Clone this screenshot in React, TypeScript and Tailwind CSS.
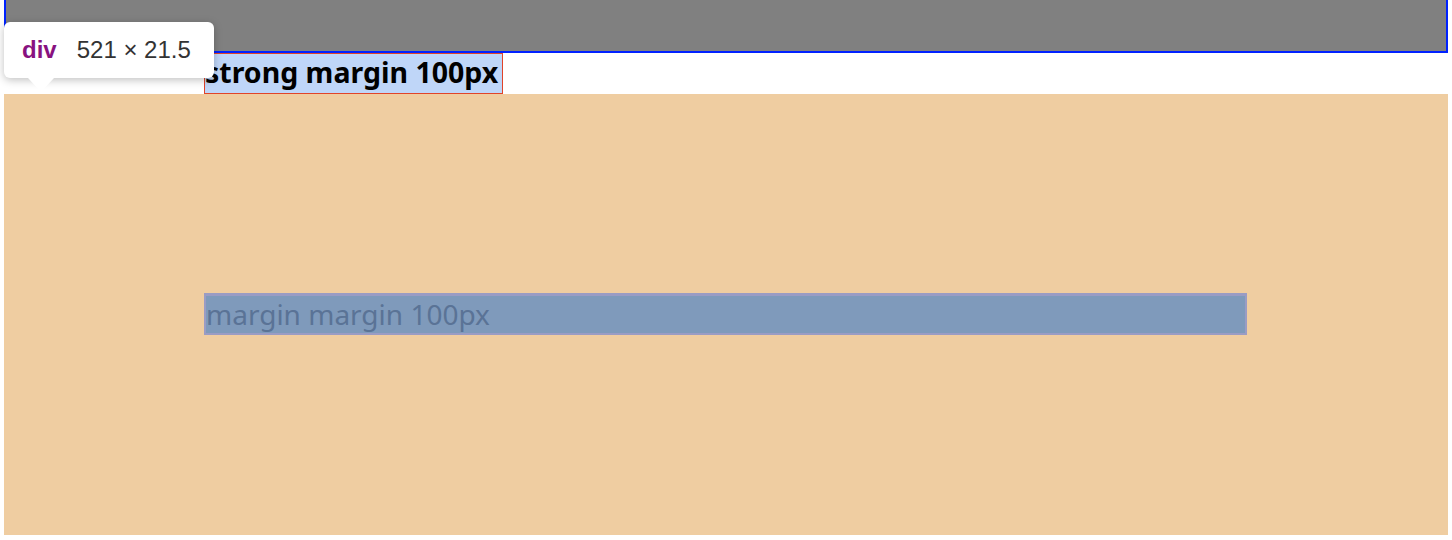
import React from "react";

const App = () => {
  return (
    <div className="relative min-h-[540px] bg-white px-1 font-['Noto_Sans','Noto_Sans_CJK_KR',sans-serif]">
      <div className="h-[53px] border-2 border-t-0 border-[#0022ff] bg-[#808080]"></div>

      <div className="ml-[200px] flex">
        <strong className="box-border flex h-[41px] w-[299px] items-center overflow-hidden whitespace-nowrap border border-[#e0442a] bg-[#bfd6f8] pb-[2px] text-[28.5px] font-bold leading-none text-black">
          strong margin 100px
        </strong>
      </div>

      <div className="bg-[#efcda1] pb-[200px] pl-[200px] pr-[201px] pt-[199px]">
        <div className="box-border flex h-[42px] items-center border-2 border-t-[3px] border-[#9a9cc4] bg-[#7f9abb] pb-[2px] text-[28px] leading-none text-[#5a7396]">
          margin margin 100px
        </div>
      </div>

      {/* devtools tooltip */}
      <div className="absolute left-1 top-[22px] flex h-[56px] w-[210px] items-center rounded-md bg-white pl-[18px] shadow-[0_2px_8px_rgba(0,0,0,0.25)] font-['Liberation_Sans','Roboto',sans-serif]">
        <div className="flex items-center gap-[20px] text-[24px]">
          <span className="font-bold text-[#881280]">div</span>
          <span className="text-[#333]">521 × 21.5</span>
        </div>
        <div className="absolute left-[24px] top-full h-0 w-0 border-x-[13px] border-t-[14px] border-x-transparent border-t-white"></div>
      </div>
    </div>
  );
};

export default App;
